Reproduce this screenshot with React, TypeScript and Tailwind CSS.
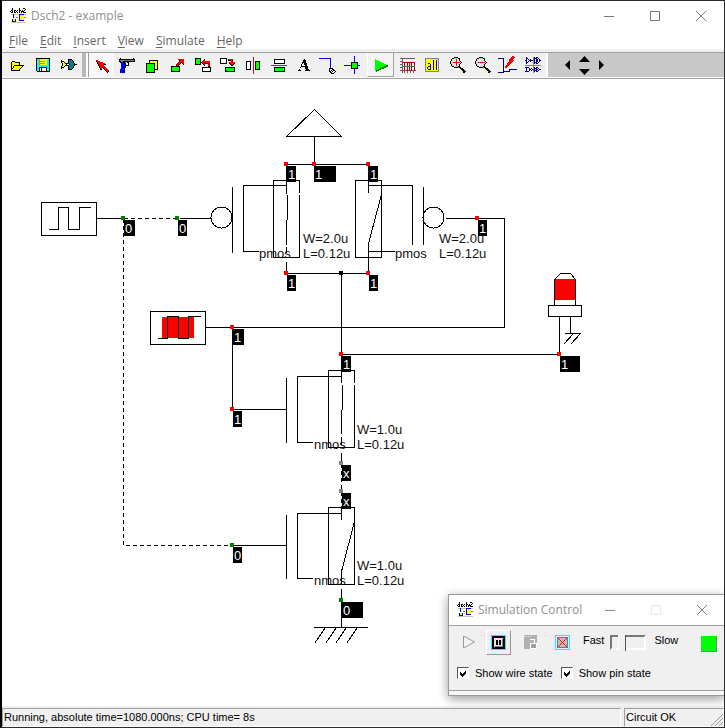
import type { ReactNode } from "react";

const UI = "font-['Open_Sans','Noto_Sans',sans-serif]";

function Glyph({ children, size = 24 }: { children: ReactNode; size?: number }) {
  return (
    <svg
      width={size}
      height={size}
      viewBox={`0 0 ${size} ${size}`}
      shapeRendering="crispEdges"
      fill="none"
      className="shrink-0"
      aria-hidden="true"
    >
      {children}
    </svg>
  );
}

const INK: Record<string, string> = {
  K: "#000000",
  R: "#ff0000",
  D: "#800000",
  Y: "#ffff00",
  T: "#008080",
  B: "#0000ff",
  N: "#000080",
  G: "#808080",
  L: "#d8d8d8",
  W: "#ffffff",
};

/* One character per pixel; a dot is left clear. */
function Pixels({ x, y, rows }: { x: number; y: number; rows: string[] }) {
  return (
    <>
      {rows.flatMap((row, j) =>
        [...row].map((ch, i) =>
          INK[ch] ? <rect key={`${i}-${j}`} x={x + i} y={y + j} width="1" height="1" fill={INK[ch]} /> : null,
        ),
      )}
    </>
  );
}

function AppIcon() {
  return (
    <Glyph size={16}>
      <Pixels
        x={0}
        y={0}
        rows={[
          "..K......K...KK.",
          "..K......K.....K",
          ".KK.KK.K.KK.K.K.",
          "K.K.K.K..K.KKK..",
          ".KK.KK.K.K.K.KKK",
        ]}
      />
      <path d="M1 6.500h15M1 14.500h15" stroke="#c8c8b0" />
      <rect x="9" y="6" width="5" height="7" fill="#ffff00" />
      <rect x="3" y="11" width="2" height="3" fill="#ffff00" />
      <path d="M3.500 6v4M2 13.500h3M2.500 11v2M5.500 11v3M10 6.500h4M9.500 6v7M10 12.500h4" stroke="#0000e8" />
      <path d="M6 9.500h2M14 9.500h2" stroke="#777" />
    </Glyph>
  );
}

const lens = (plus: boolean) => (
  <Pixels
    x={4}
    y={4}
    rows={[
      "....KKKK........",
      "..KKLLLLKK......",
      ".KLLWL" + (plus ? "R" : "L") + "LWK......",
      ".KLWLW" + (plus ? "R" : "L") + "WLK......",
      "KLLLWL" + (plus ? "R" : "L") + "LWLK.....",
      "KLLRRRRRRRLK....",
      "KLLLWL" + (plus ? "R" : "L") + "LWLK.....",
      ".KLWLW" + (plus ? "R" : "L") + "WLK......",
      ".KLLWL" + (plus ? "R" : "L") + "LWK......",
      "..KKLLLLKK......",
      "....KKKKGKK.....",
      "..........KKK...",
      "..........YKKK..",
      "...........YKKK.",
      "............YKKK",
      ".............KK.",
    ]}
  />
);

const fileTools: { name: string; art: ReactNode }[] = [
  {
    name: "Open",
    art: (
      <Pixels
        x={6}
        y={8}
        rows={[
          ".KKK.........",
          "KYYYKKKKK....",
          "KYYYYYYYK....",
          "KYYYYYYYK....",
          "KYYKKKKKKKKKK",
          "KYKYYYYYYYYK.",
          "KYKYYYYYYYK..",
          "KKYYYYYYYK...",
          "KYYYYYYYK....",
          "KKKKKKKKK....",
        ]}
      />
    ),
  },
  {
    name: "Save",
    art: (
      <>
        <path d="M5.500 5.500h13v13H6.500l-1-1z" stroke="#000" fill="#00ffff" />
        <rect x="9" y="6" width="7" height="6" fill="#ffff00" />
        <path d="M8.500 6v6M9 8.500h5M9 10.500h5" stroke="#a0a000" />
        <rect x="8" y="14" width="8" height="4" fill="#fff" />
        <path d="M8 14.500h8M8.500 14v4M15.500 14v4M10.500 15v3" stroke="#000" />
      </>
    ),
  },
  {
    name: "New symbol",
    art: (
      <Pixels
        x={4}
        y={6}
        rows={[
          ".......KKKK.....",
          "K......KTTTK....",
          "KKK....KTTTTK...",
          "KYYK...KTTTTK...",
          ".KYYKKKKTTTTTK..",
          ".KYYYK..KTTTTKKK",
          ".KYYKKKKTTTTTK..",
          "KYYK...KTTTTK...",
          "KKK....KTTTTK...",
          "K......KTTTK....",
          ".......KKKK.....",
        ]}
      />
    ),
  },
];

const drawTools: { name: string; art: ReactNode; look?: "down" | "up" }[] = [
  {
    name: "Select",
    look: "down",
    art: (
      <Pixels
        x={6}
        y={7}
        rows={[
          "RR............",
          "KRRR..........",
          ".KRRRRR.......",
          ".KRRRRRRR.....",
          "..KRRRRRKK....",
          "..KRRRRR......",
          "...KRRRRR.....",
          "...KRRKRRR....",
          "....KR.KRRR...",
          "....KK..KRRR..",
          ".........KRRR.",
          "..........KRK.",
          "...........K..",
        ]}
      />
    ),
  },
  {
    name: "Delete",
    art: (
      <Pixels
        x={4}
        y={5}
        rows={[
          ".K............K.",
          "KKKKKKKKKKKKKKKK",
          "KGGGGGGGGGGGGGGK",
          "KKGGKKKKKKKKKKKK",
          ".KBBKKG.KK......",
          "..BBBKK..K......",
          "..BBBBK..K......",
          "..BBBBKKKK......",
          "..BBBBK.........",
          "..BBBBK.........",
          "..BBBK..........",
          ".BBBBK..........",
          ".BBBBK..........",
          ".BBBBK..........",
          ".BBBBK..........",
        ]}
      />
    ),
  },
  {
    name: "Copy",
    art: (
      <>
        <path d="M9.500 7.500h8v9h-8z" fill="#ffff00" stroke="#000" />
        <path d="M6.500 10.500h8v9h-8z" fill="#00ff00" stroke="#000" />
      </>
    ),
  },
  {
    name: "Move",
    art: (
      <>
        <path d="M6.500 13.500h8v5h-8z" fill="#00ff00" stroke="#000" />
        <Pixels
          x={11}
          y={6}
          rows={[
            "..DRRRRR",
            "...KRRRR",
            "...DRRRR",
            "..DRRKRR",
            ".DRRK.KR",
            "DRRK...K",
            "KRK.....",
          ]}
        />
      </>
    ),
  },
  {
    name: "Rotate left",
    art: (
      <>
        <path d="M4.500 5.500h5v6h-5z" fill="#00ff00" stroke="#000" />
        <path d="M11.500 14.500h8v4h-8z" fill="#fff" stroke="#000" />
        <Pixels
          x={10}
          y={6}
          rows={[
            "...D.....",
            "..DR.....",
            ".DRRRRRRR",
            "DRRRRRRRR",
            ".KRDKKKRD",
            "..KR...RD",
            "...K...RD",
            ".......KK",
          ]}
        />
      </>
    ),
  },
  {
    name: "Rotate right",
    art: (
      <>
        <path d="M4.500 5.500h6v5h-6z" fill="#fff" stroke="#000" />
        <path d="M9.500 14.500h9v4h-9z" fill="#00ff00" stroke="#000" />
        <Pixels
          x={12}
          y={6}
          rows={[
            "DRRRR...",
            "KKKRD...",
            "...RD...",
            ".RRRRRR.",
            ".KRRRRK.",
            "..KRRK..",
            "...KK...",
          ]}
        />
      </>
    ),
  },
  {
    name: "Flip horizontally",
    art: (
      <>
        <path d="M5.500 8.500h4v8h-4z" fill="#fff" stroke="#000" />
        <path d="M14.500 8.500h4v8h-4z" fill="#00ff00" stroke="#000" />
        <path d="M12.500 4v17" stroke="#ff0000" />
      </>
    ),
  },
  {
    name: "Flip vertically",
    art: (
      <>
        <path d="M7.500 6.500h10v4h-10z" fill="#fff" stroke="#000" />
        <path d="M7.500 14.500h10v4h-10z" fill="#00ff00" stroke="#000" />
        <path d="M4 12.500h16" stroke="#ff0000" />
      </>
    ),
  },
  {
    name: "Text",
    art: (
      <path
        d="M12 6h1l4 11h1v1h-5v-1h1l-1-3H9l-1 3h1v1H6v-1h1zM11 9l-1 4h3z"
        fill="#000"
        fillRule="evenodd"
      />
    ),
  },
  {
    name: "Line",
    art: (
      <>
        <path d="M2 5.500h11v10" stroke="#0000ff" />
        <Pixels
          x={12}
          y={15}
          rows={["KKKK...", "KWWKK..", "KWKWKK.", "KKWKWWK", ".KKWWK.", "..KKK.."]}
        />
      </>
    ),
  },
  {
    name: "Connect",
    art: (
      <>
        <path d="M2 12.500h16M12.500 3v18" stroke="#0000ff" />
        <path d="M9.500 9.500h6v6h-6z" fill="#00ff00" stroke="#000" />
      </>
    ),
  },
  {
    name: "Run simulation",
    look: "up",
    art: (
      <>
        <path d="M7 7v12l13-6z" fill="#008000" />
        <path d="M6 6v12l12-6z" fill="#00ff00" />
      </>
    ),
  },
  {
    name: "Timing diagram",
    art: (
      <>
        <path
          d="M5 5.500h15M7.500 5v15M5 8.500h2M5 11.500h2M5 14.500h2M5 17.500h16M9.500 17v3M12.500 17v3M15.500 17v3M18.500 17v3"
          stroke="#606060"
        />
        <path d="M8 9.500h12M9.500 9v9M12.500 9v9M14.500 9v9M16.500 9v9M19.500 9v9" stroke="#b00000" />
        <path d="M8 13.500h12" stroke="#606060" />
      </>
    ),
  },
  {
    name: "View all",
    art: (
      <>
        <path d="M5.500 5.500h13v13h-13z" fill="#ffff00" stroke="#808080" />
        <path d="M8 10.500h2M10.500 11v6M8 13.500h2M7.500 14v2M8 16.500h2M13.500 7v10M16.500 7v10" stroke="#0000c0" />
      </>
    ),
  },
  { name: "Zoom in", art: lens(true) },
  { name: "Zoom out", art: lens(false) },
  {
    name: "Electrical net",
    art: (
      <>
        <path d="M2 5.500h5.500v14H2M7.500 18.500h6v-2H21" stroke="#000090" />
        <Pixels
          x={9}
          y={3}
          rows={[
            ".......RR.",
            "......RRRR",
            ".....RRRR.",
            "....RRRR..",
            "....RRRRR.",
            "....RRRR..",
            "...RRRR...",
            "..RRRR....",
            "..RRR.....",
            ".RRR......",
            "RRR.......",
            "RR........",
          ]}
        />
      </>
    ),
  },
  {
    name: "Hierarchy",
    art: (
      <Pixels
        x={4}
        y={4}
        rows={[
          ".N......GN.NN...",
          ".NN.....GNNN.N..",
          ".N.N.N..GN.NN.N.",
          "NN..NNNNGN.NN.NN",
          ".N.N.N..GN.NN.N.",
          ".NN.....GNNN.N..",
          ".N......GN.NN...",
          "........G.......",
          "GGGGGGGGGGGGGGGG",
          "........G.......",
          "NNNN....GN.NN...",
          ".N..N.N.GNNN.N..",
          ".N..NN.NGN.NN.NN",
          ".N..N.N.GNNN.N..",
          "NNNN....GN.NN...",
          "........G.......",
        ]}
      />
    ),
  },
];

function ToolButton({ name, art, look }: { name: string; art: ReactNode; look?: "down" | "up" }) {
  const face =
    look === "down"
      ? "bg-[#f8f8f8]"
      : look === "up"
        ? "border-r border-b border-[#a0a0a0] border-l-white border-l bg-[#f4f4f4]"
        : "";
  return (
    <button type="button" aria-label={name} className={`flex h-full min-w-0 flex-1 items-center justify-center ${face}`}>
      <Glyph>{art}</Glyph>
    </button>
  );
}

const menus = ["File", "Edit", "Insert", "View", "Simulate", "Help"];

function WindowButtons({ small = false }: { small?: boolean }) {
  return (
    <div className={`flex h-full items-center ${small ? "text-[#888]" : "text-[#777]"}`}>
      {["Minimize", "Maximize", "Close"].map((name) => (
        <button key={name} type="button" aria-label={name} className="flex h-full w-[46px] items-center justify-center">
          <svg width="12" height="12" viewBox="0 0 12 12" fill="none" stroke="currentColor" aria-hidden="true">
            {name === "Minimize" && <path d="M1 6.500h10" />}
            {name === "Maximize" && <path d="M1.500 1.500h9v9h-9z" stroke={small ? "#e8e8e8" : "currentColor"} />}
            {name === "Close" && <path d="M1 1l10 10M11 1L1 11" />}
          </svg>
        </button>
      ))}
    </div>
  );
}

function State({ x, y, v, w = 9 }: { x: number; y: number; v: string; w?: number }) {
  return (
    <>
      <rect x={x} y={y} width={w} height={16} fill="#000" />
      <text x={x + 1} y={y + 13} fill="#fff">
        {v}
      </text>
    </>
  );
}

const pins: [number, number, string][] = [
  [121, 216, "#008000"], [175, 216, "#008000"], [230, 543, "#008000"], [339, 598, "#008000"],
  [284, 162, "#ff0000"], [312, 162, "#ff0000"], [366, 162, "#ff0000"], [284, 271, "#ff0000"],
  [366, 271, "#ff0000"], [475, 216, "#ff0000"], [230, 325, "#ff0000"], [230, 407, "#ff0000"],
  [339, 352, "#ff0000"], [557, 352, "#ff0000"], [339, 271, "#000000"], [339, 461, "#808080"],
  [339, 489, "#808080"],
];

const states: [number, number, string, number][] = [
  [124, 220, "0", 11], [178, 220, "0", 9], [287, 166, "1", 9], [314, 166, "1", 22], [369, 166, "1", 9],
  [287, 275, "1", 9], [369, 275, "1", 9], [478, 220, "1", 9], [233, 329, "1", 11], [233, 411, "1", 9],
  [342, 356, "1", 9], [560, 356, "1", 20], [342, 465, "x", 9], [342, 493, "x", 9], [233, 547, "0", 9],
  [342, 602, "0", 21],
];

const labels: [number, number, string][] = [
  [259, 258, "pmos"], [303, 243, "W=2.0u"], [303, 258, "L=0.12u"],
  [395, 258, "pmos"], [439, 243, "W=2.0u"], [439, 258, "L=0.12u"],
  [314, 449, "nmos"], [357, 434, "W=1.0u"], [357, 449, "L=0.12u"],
  [314, 585, "nmos"], [357, 570, "W=1.0u"], [357, 585, "L=0.12u"],
];

function Schematic() {
  return (
    <svg
      className="block h-full w-full font-['Liberation_Sans',Arial,sans-serif] text-[13px]"
      shapeRendering="crispEdges"
      role="img"
      aria-label="NAND gate schematic"
    >
      <g transform="translate(-2 -79)">
        {labels.map(([x, y, t]) => (
          <text key={`${x}-${y}`} x={x} y={y} fill="#111">
            {t}
          </text>
        ))}
        <rect x="162" y="317" width="32" height="21" fill="#ff0000" />
        <rect x="555" y="279" width="20" height="21" fill="#ff0000" />
        <g transform="translate(0.5 0.5)" fill="none" stroke="#000">
          {/* clock and input sources */}
          <path d="M41 202h55v33H41zM48 229h10v-22h10v22h11v-22h11M96 218h27" />
          <path d="M150 311h55v33h-55zM157 338h10v-22h11v22h10v-22h12M205 327H504V218H445" />
          <path d="M123 218h54M123 218V545H232" strokeDasharray="4 3" />
          <path d="M179 218h32M232 327v82H286" />
          {/* supply */}
          <path d="M286 136h55L314 109zM314 136v28M286 164H368" />
          {/* left pmos */}
          <circle cx="221" cy="217" r="10.500" />
          <path d="M232 186v66M286 185H243V251h15M299 194v63H273V180h26v12M286 164v29M287 194v25M286 219v25M286 246v6M286 261v12H368" />
          {/* right pmos */}
          <circle cx="433" cy="217" r="10.500" />
          <path d="M355 180h26v77h-26zM368 164v28M368 185h44v59M423 186v58M381 194L368 243v30M368 251h26" />
          {/* output net */}
          <path d="M341 273v109M341 354H559V316M570 316v17M564 333h16M573 333l-10 11M580 333l-10 11" />
          <path d="M554 305V279l6-6h10l5 6v26M548 305h33v11h-33z" />
          {/* upper nmos */}
          <path d="M286 377v65M341 376H297V442h15M354 384v63H328V370h26v12M342 384v25M341 409v24M341 436v8M341 452v10" />
          <path d="M341 463V507" strokeDasharray="4 3" />
          {/* lower nmos */}
          <path d="M232 545h54M286 514v64M341 513H297V578h15M328 507h26v77h-26zM341 507v12M354 521L341 571v13M341 588v39" />
          <path d="M313 627h54M325 627l-11 16M336 627l-11 16M346 627l-11 16M357 627l-11 16" />
        </g>
        {pins.map(([x, y, c]) => (
          <rect key={`${x}-${y}`} x={x} y={y} width="4" height="4" fill={c} />
        ))}
        {states.map(([x, y, v, w]) => (
          <State key={`${x}-${y}`} x={x} y={y} v={v} w={w} />
        ))}
      </g>
    </svg>
  );
}

function Check({ id, label }: { id: string; label: string }) {
  return (
    <label htmlFor={id} className="flex items-center gap-[6px]">
      <span className="relative block h-3 w-3">
        <input
          id={id}
          type="checkbox"
          defaultChecked
          className="peer block h-3 w-3 appearance-none border border-t-[#555] border-r-white border-b-white border-l-[#555] bg-white"
        />
        <svg
          className="pointer-events-none absolute inset-0 hidden peer-checked:block"
          width="12"
          height="12"
          viewBox="0 0 12 12"
          shapeRendering="crispEdges"
          aria-hidden="true"
        >
          <path d="M3 5l2 2 4-4v3L5 10 3 8z" fill="#000" />
        </svg>
      </span>
      {label}
    </label>
  );
}

function SimulationControl() {
  return (
    <section
      aria-label="Simulation Control"
      className="absolute right-[-1px] bottom-[10px] w-[277px] border border-r-0 border-[#999] bg-[#f0f0f0] shadow-[0_3px_10px_rgba(0,0,0,0.4)]"
    >
      <header className={`flex h-[30px] items-center bg-white pl-2 text-[12px] text-[#909090] ${UI}`}>
        <AppIcon />
        <span className="ml-[5px] flex-1 whitespace-nowrap">Simulation Control</span>
        <WindowButtons small />
      </header>
      <div className="h-[66px] border-t border-b border-[#a0a0a0] pt-[3px] text-[11px] text-black">
        <div className="flex h-[26px] items-center pl-2">
          <button type="button" aria-label="Run" className="flex w-[24px] justify-center">
            <svg width="14" height="14" viewBox="0 0 14 14" fill="#f4f4f4" stroke="#999" aria-hidden="true">
              <path d="M1.500 1v12l11-6z" />
            </svg>
          </button>
          <button
            type="button"
            aria-label="Pause"
            className="ml-[5px] flex h-[25px] w-[25px] items-center justify-center border border-t-white border-r-[#999] border-b-[#999] border-l-white"
          >
            <Glyph size={15}>
              <path d="M0.500 0.500h14v14h-14z" stroke="#00ffff" />
              <path d="M2 2h11v11H2z" stroke="#000" strokeWidth="2" fill="#e8e8e8" />
              <path d="M4 11.500h8M11.500 4v8" stroke="#808080" />
              <path d="M6 5v5M9 5v5" stroke="#000" strokeWidth="2" />
            </Glyph>
          </button>
          <button type="button" aria-label="Step" className="ml-[12px]">
            <Glyph size={15}>
              <path d="M1 0h13v14H1z" fill="#b0b0b0" />
              <path d="M1 1.500h8" stroke="#e8e8e8" strokeDasharray="1 1" />
              <path d="M7 4.500h4v3M7.500 8.500h6v5h-6z" stroke="#fff" />
              <path d="M8 9h5v4H8z" fill="#a0a0a0" />
            </Glyph>
          </button>
          <button type="button" aria-label="Stop" className="ml-[17px]">
            <Glyph size={15}>
              <path d="M0.500 0.500h14v14h-14z" stroke="#00ffff" />
              <path d="M2.500 2.500h10v10h-10z" fill="#c0c0c0" stroke="#777" />
              <path d="M3 3l9 9M12 3l-9 9" stroke="#ff0000" />
            </Glyph>
          </button>
          <label htmlFor="speed" className="ml-[13px] pb-[3px]">
            Fast
          </label>
          <input
            id="speed"
            type="range"
            min="0"
            max="100"
            defaultValue="22"
            className="ml-[6px] h-[16px] w-[36px] appearance-none bg-transparent [&::-webkit-slider-runnable-track]:h-[15px] [&::-webkit-slider-runnable-track]:border-2 [&::-webkit-slider-runnable-track]:border-t-[#777] [&::-webkit-slider-runnable-track]:border-r-white [&::-webkit-slider-runnable-track]:border-b-white [&::-webkit-slider-runnable-track]:border-l-[#777] [&::-webkit-slider-thumb]:-mt-[2px] [&::-webkit-slider-thumb]:h-[16px] [&::-webkit-slider-thumb]:w-[8px] [&::-webkit-slider-thumb]:appearance-none [&::-webkit-slider-thumb]:border-r [&::-webkit-slider-thumb]:border-l [&::-webkit-slider-thumb]:border-l-white [&::-webkit-slider-thumb]:border-r-[#555] [&::-webkit-slider-thumb]:bg-[#f0f0f0]"
          />
          <span className="ml-[8px] pb-[3px]">Slow</span>
          <span className="mt-[3px] mr-[8px] ml-auto h-[16px] w-[16px] border-r border-b border-[#808080] bg-[#00ff00]" />
        </div>
        <div className="mt-[8px] flex h-[20px] items-center gap-[8px] pl-2">
          <Check id="wire-state" label="Show wire state" />
          <Check id="pin-state" label="Show pin state" />
        </div>
      </div>
      <div className="h-[4px] bg-[#f6f6f6]" />
    </section>
  );
}

export default function App() {
  return (
    <div className="flex h-screen flex-col overflow-hidden border-t border-r border-b border-l-2 border-[#2b2b2e] border-l-black bg-white font-['Liberation_Sans',Arial,sans-serif] text-black">
      <header className={`flex h-[29px] shrink-0 items-center pl-2 text-[12px] text-[#909090] ${UI}`}>
        <AppIcon />
        <h1 className="ml-[5px] flex-1">Dsch2 - example</h1>
        <WindowButtons />
      </header>
      <nav className={`flex h-[19px] shrink-0 items-center gap-[12px] pt-[2px] pl-[7px] text-[12px] text-[#666] ${UI}`}>
        {menus.map((m) => (
          <button key={m} type="button">
            <span className="underline underline-offset-2">{m[0]}</span>
            {m.slice(1)}
          </button>
        ))}
      </nav>
      <div className="flex h-[30px] shrink-0 border-t-[3px] border-b border-t-[#f0f0f0] border-b-[#a0a0a0] bg-white">
        <div className="flex w-full border-t border-t-[#a0a0a0] pb-px" role="toolbar" aria-label="Tools">
          <div className="flex w-[80px] shrink-0 bg-[#f0f0f0] pl-[2px]">
            {fileTools.map((t) => (
              <ToolButton key={t.name} {...t} />
            ))}
          </div>
          <div className="w-[7px] shrink-0 border-r border-l-4 border-r-[#a0a0a0] border-l-[#b8b8b8] bg-white" />
          <div className="flex w-[457px] shrink-0 bg-[#f0f0f0]">
            {drawTools.map((t) => (
              <ToolButton key={t.name} {...t} />
            ))}
          </div>
          <div className="ml-[2px] flex flex-1 items-center gap-[9px] bg-[#c8c8c8] pl-[17px]">
            <button type="button" aria-label="Scroll left">
              <svg width="5" height="10" viewBox="0 0 5 10" aria-hidden="true">
                <path d="M5 0v10L0 5z" />
              </svg>
            </button>
            <div className="flex flex-col gap-[7px]">
              <button type="button" aria-label="Scroll up">
                <svg width="11" height="6" viewBox="0 0 11 6" className="block" aria-hidden="true">
                  <path d="M0 6h11L5.500 0z" />
                </svg>
              </button>
              <button type="button" aria-label="Scroll down">
                <svg width="11" height="6" viewBox="0 0 11 6" className="block" aria-hidden="true">
                  <path d="M0 0h11L5.500 6z" />
                </svg>
              </button>
            </div>
            <button type="button" aria-label="Scroll right">
              <svg width="5" height="10" viewBox="0 0 5 10" aria-hidden="true">
                <path d="M0 0v10l5-5z" />
              </svg>
            </button>
          </div>
        </div>
      </div>
      <main className="relative min-h-0 flex-1">
        <Schematic />
        <SimulationControl />
      </main>
      <footer className="flex h-[21px] shrink-0 gap-[3px] bg-[#f0f0f0] pt-[2px] text-[11px]">
        <div className="flex flex-1 items-center border border-t-[#a0a0a0] border-r-white border-b-white border-l-[#a0a0a0] pl-px">
          Running, absolute time=1080.000ns; CPU time= 8s
        </div>
        <div className="flex w-[100px] items-center justify-between border border-t-[#a0a0a0] border-r-white border-b-white border-l-[#a0a0a0] pl-px">
          Circuit OK
          <svg width="12" height="12" viewBox="0 0 12 12" stroke="#999" className="self-end" aria-hidden="true">
            <path d="M0 12L12 0M4 12l8-8M8 12l4-4" />
          </svg>
        </div>
      </footer>
    </div>
  );
}
